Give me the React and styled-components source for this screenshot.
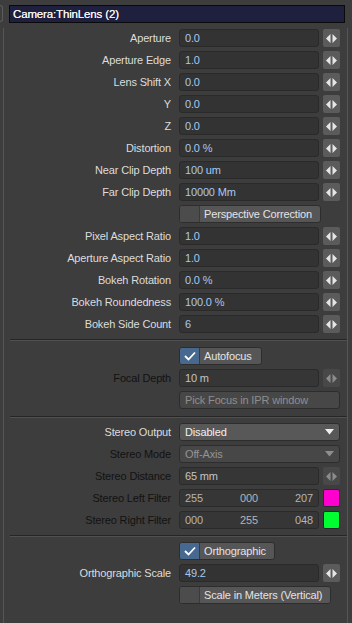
import styled, { createGlobalStyle } from "styled-components";

const GlobalStyle = createGlobalStyle`
  html, body {
    margin: 0;
    padding: 0;
    background: #3d3d3d;
  }
  * {
    box-sizing: border-box;
  }
`;

const Page = styled.div`
  width: 352px;
  height: 623px;
  background: #3d3d3d;
  overflow: hidden;
  font-family: "Liberation Sans", Arial, sans-serif;
  font-size: 11px;
  letter-spacing: -0.15px;
  color: #dcdcdc;
`;

const TopBar = styled.div`
  display: flex;
  align-items: flex-start;
  gap: 6px;
  padding-top: 5px;
`;

const TabStub = styled.div`
  width: 3px;
  height: 17px;
  border: 1px solid #5c5c5c;
  border-left: none;
  border-radius: 0 3px 3px 0;
`;

const Title = styled.div`
  width: 336px;
  height: 18px;
  background: #1f1f3e;
  border: 1px solid #0a0a0a;
  color: #f2f2f2;
  font-size: 11.5px;
  line-height: 16px;
  padding-left: 3px;
  text-shadow: 0 0 0.4px #fff;
`;

const Body = styled.div`
  margin-top: 5px;
  margin-left: 3px;
  width: 345px;
  height: 600px;
  border-left: 1px solid #565656;
  border-right: 1px solid #565656;
  padding-top: 1px;
`;

const Section = styled.div`
  display: flex;
  flex-direction: column;
  gap: 4px;
`;

const Separator = styled.div`
  margin: ${(p) => p.$m || "6px 0 6px 6px"};
  height: 2px;
  border-top: 1px solid #262626;
  border-bottom: 1px solid #505050;
`;

const Row = styled.div`
  display: grid;
  grid-template-columns: 171px 140px 17px;
  column-gap: 4px;
  height: 18px;
  align-items: center;
`;

const Label = styled.div`
  text-align: right;
  padding-right: 4px;
  color: ${(p) => (p.$dim ? "#121212" : "#dcdcdc")};
  white-space: nowrap;
  line-height: 18px;
`;

const Field = styled.div`
  height: 18px;
  background: ${(p) => (p.$dim ? "#363636" : "#333333")};
  border: 1px solid #2a2a2a;
  border-radius: 3px;
  color: ${(p) => (p.$dim ? "#c4c4c4" : "#a9c8f0")};
  padding: 0 5px;
  line-height: 16px;
  white-space: nowrap;
`;

const Triple = styled(Field)`
  display: flex;
  justify-content: space-between;
  color: #b4b4b4;
`;

const Spin = styled.div`
  width: 17px;
  height: 18px;
  border-radius: 2px;
  background: ${(p) => (p.$dim ? "#484848" : "#5b5b5b")};
  display: flex;
  align-items: center;
  justify-content: center;
  color: ${(p) => (p.$dim ? "#8c8c8c" : "#e6e6e6")};
`;

const Swatch = styled.div`
  width: 17px;
  height: 18px;
  border: 1px solid #2a2a2a;
  border-radius: 2px;
  background: ${(p) => p.$color};
`;

const Button = styled.div`
  grid-column: 2 / 4;
  width: ${(p) => p.$w}px;
  height: 18px;
  display: flex;
  align-items: stretch;
  background: ${(p) => (p.$dim ? "#474747" : "#565656")};
  border: 1px solid #2d2d2d;
  border-radius: 3px;
  overflow: hidden;
  color: ${(p) => (p.$dim ? "#8e8e8e" : "#e4e4e4")};
  line-height: 16px;
  white-space: nowrap;
  padding-left: ${(p) => (p.$plain ? 5 : 0)}px;
`;

const CheckBox = styled.div`
  width: 20px;
  flex: none;
  background: ${(p) => (p.$on ? "#47688f" : "#4c4c4c")};
  border-right: 1px solid #3a3a3a;
  display: flex;
  align-items: center;
  justify-content: center;
  margin-right: 4px;
`;

const Select = styled.div`
  grid-column: 2 / 4;
  height: 18px;
  background: ${(p) => (p.$dim ? "#474747" : "#585858")};
  border: 1px solid #2d2d2d;
  border-radius: 3px;
  color: ${(p) => (p.$dim ? "#949494" : "#f0f0f0")};
  padding: 0 5px;
  line-height: 16px;
  display: flex;
  align-items: center;
  justify-content: space-between;
`;

const SpinIcon = () => (
  <svg width="11" height="9" viewBox="0 0 11 9">
    <path d="M0 4.5 L4.5 0 V9 Z M6.5 0 L11 4.5 L6.5 9 Z" fill="currentColor" />
  </svg>
);

const Check = () => (
  <svg width="12" height="10" viewBox="0 0 12 10">
    <path d="M1 5 L4.5 8.5 L11 1.5" fill="none" stroke="#ffffff" strokeWidth="1.8" />
  </svg>
);

const Caret = ({ color }) => (
  <svg width="9" height="6" viewBox="0 0 9 6">
    <path d="M0 0 H9 L4.5 5.5 Z" fill={color} />
  </svg>
);

function NumRow({ label, value, dim }) {
  return (
    <Row>
      <Label $dim={dim}>{label}</Label>
      <Field $dim={dim}>{value}</Field>
      <Spin $dim={dim}>
        <SpinIcon />
      </Spin>
    </Row>
  );
}

function ToggleRow({ text, on, w }) {
  return (
    <Row>
      <Label />
      <Button $w={w}>
        <CheckBox $on={on}>{on && <Check />}</CheckBox>
        {text}
      </Button>
    </Row>
  );
}

function FilterRow({ label, rgb, color }) {
  return (
    <Row>
      <Label $dim>{label}</Label>
      <Triple $dim>
        {rgb.map((v, i) => (
          <span key={i}>{v}</span>
        ))}
      </Triple>
      <Swatch $color={color} />
    </Row>
  );
}

const lensRows = [
  ["Aperture", "0.0"],
  ["Aperture Edge", "1.0"],
  ["Lens Shift X", "0.0"],
  ["Y", "0.0"],
  ["Z", "0.0"],
  ["Distortion", "0.0 %"],
  ["Near Clip Depth", "100 um"],
  ["Far Clip Depth", "10000 Mm"],
];

const bokehRows = [
  ["Pixel Aspect Ratio", "1.0"],
  ["Aperture Aspect Ratio", "1.0"],
  ["Bokeh Rotation", "0.0 %"],
  ["Bokeh Roundedness", "100.0 %"],
  ["Bokeh Side Count", "6"],
];

export default function App() {
  return (
    <Page>
      <GlobalStyle />
      <TopBar>
        <TabStub />
        <Title>Camera:ThinLens (2)</Title>
      </TopBar>
      <Body>
        <Section>
          {lensRows.map(([l, v]) => (
            <NumRow key={l} label={l} value={v} />
          ))}
          <ToggleRow text="Perspective Correction" w={142} />
          {bokehRows.map(([l, v]) => (
            <NumRow key={l} label={l} value={v} />
          ))}
        </Section>
        <Separator />
        <Section>
          <ToggleRow text="Autofocus" on w={83} />
          <NumRow label="Focal Depth" value="10 m" dim />
          <Row>
            <Label />
            <Button $dim $plain $w={161}>
              Pick Focus in IPR window
            </Button>
          </Row>
        </Section>
        <Separator $m="7px 0 5px 6px" />
        <Section>
          <Row>
            <Label>Stereo Output</Label>
            <Select>
              Disabled
              <Caret color="#f0f0f0" />
            </Select>
          </Row>
          <Row>
            <Label $dim>Stereo Mode</Label>
            <Select $dim>
              Off-Axis
              <Caret color="#8e8e8e" />
            </Select>
          </Row>
          <NumRow label="Stereo Distance" value="65 mm" dim />
          <FilterRow label="Stereo Left Filter" rgb={["255", "000", "207"]} color="#ff00cf" />
          <FilterRow label="Stereo Right Filter" rgb={["000", "255", "048"]} color="#00ff30" />
        </Section>
        <Separator $m="6px 0 5px 6px" />
        <Section>
          <ToggleRow text="Orthographic" on w={96} />
          <NumRow label="Orthographic Scale" value="49.2" />
          <ToggleRow text="Scale in Meters (Vertical)" w={152} />
        </Section>
      </Body>
    </Page>
  );
}
